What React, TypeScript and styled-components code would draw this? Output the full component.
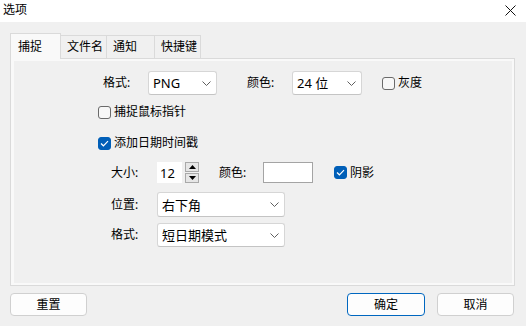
import React from "react";
import styled, { createGlobalStyle } from "styled-components";

const GlobalStyle = createGlobalStyle`
  html, body {
    margin: 0;
    padding: 0;
    background: #f0f0f0;
  }
  body {
    font-family: "Noto Sans", "Noto Sans CJK SC", sans-serif;
    font-size: 12px;
    line-height: 16px;
    color: #000;
  }
`;

const Window = styled.div`
  width: 526px;
  height: 326px;
  display: flex;
  flex-direction: column;
  background: #f0f0f0;
  overflow: hidden;
`;

const TitleBar = styled.div`
  height: 22px;
  background: #fff;
  display: flex;
  align-items: center;
  justify-content: space-between;
  padding: 0 10px 2px 3px;
  box-sizing: border-box;
`;

const Body = styled.div`
  display: flex;
  flex-direction: column;
  padding: 11px 11px 0 10px;
`;

const TabStrip = styled.div`
  display: flex;
  align-items: flex-end;
  height: 25px;
`;

const Tab = styled.div<{ $w: number; $active?: boolean }>`
  width: ${(p) => p.$w}px;
  box-sizing: border-box;
  height: ${(p) => (p.$active ? 26 : 23)}px;
  margin-bottom: ${(p) => (p.$active ? -1 : 0)}px;
  margin-left: ${(p) => (p.$active ? 0 : -1)}px;
  padding: ${(p) => (p.$active ? "5px 0 0 7px" : "3px 0 0 6px")};
  background: ${(p) => (p.$active ? "#f9f9f9" : "#f0f0f0")};
  border: 1px solid #dadada;
  border-bottom: none;
  position: relative;
  z-index: ${(p) => (p.$active ? 2 : 1)};
  &:first-child {
    margin-left: 0;
  }
`;

const Panel = styled.div`
  height: 228px;
  box-sizing: border-box;
  border: 1px solid #dadada;
  background: #f9f9f9;
  padding: 2px 2px 2px 3px;
  display: flex;
`;

const PanelInner = styled.div`
  flex: 1;
  background: #f0f0f0;
  display: flex;
  flex-direction: column;
`;

const Row = styled.div<{ $top: number; $h: number; $left: number }>`
  display: flex;
  align-items: center;
  height: ${(p) => p.$h}px;
  margin-top: ${(p) => p.$top}px;
  padding-left: ${(p) => p.$left}px;
`;

const Label = styled.span<{ $w: number; $ml?: number }>`
  width: ${(p) => p.$w}px;
  margin-left: ${(p) => p.$ml || 0}px;
  flex-shrink: 0;
`;

const SelectBox = styled.div<{ $w: number; $h: number }>`
  width: ${(p) => p.$w}px;
  height: ${(p) => p.$h}px;
  box-sizing: border-box;
  background: #fff;
  border: 1px solid #d6d6d6;
  border-bottom-color: #c4c4c4;
  border-radius: 3px;
  display: flex;
  align-items: center;
  justify-content: space-between;
  padding: 0 5px 0 4px;
  font-size: 13px;
`;

const CheckWrap = styled.label<{ $ml?: number }>`
  display: flex;
  align-items: center;
  gap: 3px;
  margin-left: ${(p) => p.$ml || 0}px;
`;

const Box = styled.span<{ $checked?: boolean }>`
  width: 13px;
  height: 13px;
  box-sizing: border-box;
  border-radius: 3px;
  border: 1px solid ${(p) => (p.$checked ? "#005fb8" : "#6a6a6a")};
  background: ${(p) => (p.$checked ? "#005fb8" : "#f7f7f7")};
  display: flex;
  align-items: center;
  justify-content: center;
`;

const SpinInput = styled.div`
  width: 25px;
  height: 21px;
  box-sizing: border-box;
  background: #fff;
  display: flex;
  align-items: center;
  padding-left: 3px;
  font-size: 13px;
`;

const SpinButtons = styled.div`
  display: flex;
  flex-direction: column;
  gap: 1px;
  margin-left: 3px;
`;

const SpinBtn = styled.div`
  width: 14px;
  height: 10px;
  box-sizing: border-box;
  border: 1px solid #a9a9a9;
  background: #e6e6e6;
  display: flex;
  align-items: center;
  justify-content: center;
`;

const ColorBox = styled.div`
  width: 50px;
  height: 21px;
  box-sizing: border-box;
  border: 1px solid #a4a4a4;
  background: #fff;
`;

const Footer = styled.div`
  display: flex;
  justify-content: space-between;
  margin-top: 7px;
  padding-right: 1px;
`;

const ButtonGroup = styled.div`
  display: flex;
  gap: 12px;
`;

const Button = styled.div<{ $primary?: boolean; $w?: number }>`
  width: ${(p) => p.$w || 77}px;
  height: 23px;
  box-sizing: border-box;
  background: #fdfdfd;
  border: 1px solid ${(p) => (p.$primary ? "#0067c0" : "#d0d0d0")};
  border-radius: 4px;
  display: flex;
  align-items: center;
  justify-content: center;
`;

const Chevron = () => (
  <svg width="9" height="5" viewBox="0 0 9 5">
    <path d="M0.5 0.5 L4.5 4.5 L8.5 0.5" fill="none" stroke="#5f5f5f" strokeWidth="1" />
  </svg>
);

const Select: React.FC<{ w: number; h: number; value: string }> = ({ w, h, value }) => (
  <SelectBox $w={w} $h={h}>
    <span>{value}</span>
    <Chevron />
  </SelectBox>
);

const Check: React.FC<{ checked?: boolean; text: string; ml?: number }> = ({
  checked,
  text,
  ml,
}) => (
  <CheckWrap $ml={ml}>
    <Box $checked={checked}>
      {checked && (
        <svg width="9" height="7" viewBox="0 0 9 7">
          <path d="M1 3.5 L3.4 5.8 L8 1.2" fill="none" stroke="#fff" strokeWidth="1.2" />
        </svg>
      )}
    </Box>
    <span>{text}</span>
  </CheckWrap>
);

export default function App() {
  return (
    <>
      <GlobalStyle />
      <Window>
        <TitleBar>
          <span>选项</span>
          <svg width="11" height="11" viewBox="0 0 11 11">
            <path d="M0.5 0.5 L10.5 10.5 M10.5 0.5 L0.5 10.5" stroke="#111" strokeWidth="1" />
          </svg>
        </TitleBar>
        <Body>
          <TabStrip>
            <Tab $w={51} $active>
              捕捉
            </Tab>
            <Tab $w={47}>文件名</Tab>
            <Tab $w={49}>通知</Tab>
            <Tab $w={47}>快捷键</Tab>
          </TabStrip>
          <Panel>
            <PanelInner>
              <Row $top={10} $h={24} $left={89}>
                <Label $w={45}>格式:</Label>
                <Select w={69} h={24} value="PNG" />
                <Label $w={45} $ml={30}>
                  颜色:
                </Label>
                <Select w={70} h={24} value="24 位" />
                <Check text="灰度" ml={20} />
              </Row>
              <Row $top={5} $h={24} $left={84}>
                <Check text="捕捉鼠标指针" />
              </Row>
              <Row $top={7} $h={24} $left={84}>
                <Check checked text="添加日期时间戳" />
              </Row>
              <Row $top={7} $h={21} $left={97}>
                <Label $w={46}>大小:</Label>
                <SpinInput>12</SpinInput>
                <SpinButtons>
                  <SpinBtn>
                    <svg width="7" height="4" viewBox="0 0 7 4">
                      <path d="M0 4 L3.5 0 L7 4 Z" fill="#000" />
                    </svg>
                  </SpinBtn>
                  <SpinBtn>
                    <svg width="7" height="4" viewBox="0 0 7 4">
                      <path d="M0 0 L3.5 4 L7 0 Z" fill="#000" />
                    </svg>
                  </SpinBtn>
                </SpinButtons>
                <Label $w={44} $ml={20}>
                  颜色:
                </Label>
                <ColorBox />
                <Check checked text="阴影" ml={21} />
              </Row>
              <Row $top={9} $h={25} $left={97}>
                <Label $w={46}>位置:</Label>
                <Select w={128} h={25} value="右下角" />
              </Row>
              <Row $top={6} $h={24} $left={97}>
                <Label $w={46}>格式:</Label>
                <Select w={128} h={24} value="短日期模式" />
              </Row>
            </PanelInner>
          </Panel>
          <Footer>
            <Button>重置</Button>
            <ButtonGroup>
              <Button $primary $w={78}>
                确定
              </Button>
              <Button>取消</Button>
            </ButtonGroup>
          </Footer>
        </Body>
      </Window>
    </>
  );
}
